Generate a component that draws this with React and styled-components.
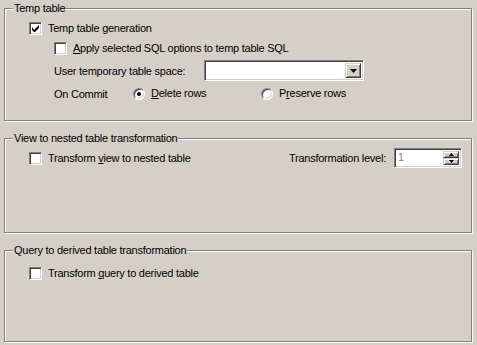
import React from 'react';
import styled, { createGlobalStyle } from 'styled-components';

const GlobalStyle = createGlobalStyle`
  html, body {
    margin: 0;
    padding: 0;
    background: #d4d0c8;
  }
  body {
    font-family: "Liberation Sans", Arial, sans-serif;
    font-size: 11px;
    letter-spacing: -0.25px;
    color: #000;
  }
`;

const Page = styled.div`
  width: 477px;
  height: 345px;
  box-sizing: border-box;
  padding: 8px 4px 0 4px;
  display: flex;
  flex-direction: column;
  gap: 17px;
  background: #d4d0c8;
`;

const Group = styled.div`
  position: relative;
  width: 468px;
  height: ${p => p.$height}px;
  border: 1px solid #808080;
  box-shadow: inset 1px 1px 0 #fff, 1px 1px 0 #fff;
  padding-top: ${p => p.$padTop}px;
  box-sizing: border-box;
  display: flex;
  flex-direction: column;
`;

const Legend = styled.span`
  position: absolute;
  top: -7px;
  left: 8px;
  padding: 0 1px;
  line-height: 13px;
  background: #d4d0c8;
`;

const Row = styled.div`
  display: flex;
  align-items: center;
  height: ${p => p.$height || 13}px;
  margin-left: ${p => p.$indent || 0}px;
  margin-top: ${p => p.$top || 0}px;
  margin-right: ${p => p.$right || 0}px;
`;

const Box = styled.span`
  width: 13px;
  height: 13px;
  box-sizing: border-box;
  flex: none;
  background: #fff;
  border-top: 1px solid #808080;
  border-left: 1px solid #808080;
  border-right: 1px solid #fff;
  border-bottom: 1px solid #fff;
  box-shadow: inset 1px 1px 0 #404040, inset -1px -1px 0 #d4d0c8;
  display: flex;
  align-items: center;
  justify-content: center;
`;

const Round = styled.span`
  width: 12px;
  height: 12px;
  box-sizing: border-box;
  flex: none;
  border-radius: 50%;
  background: #fff;
  border: 1px solid;
  border-color: #808080 #fff #fff #808080;
  box-shadow: inset 1px 1px 0 #404040, inset -1px -1px 0 #d4d0c8;
  display: flex;
  align-items: center;
  justify-content: center;
`;

const Dot = styled.span`
  width: 4px;
  height: 4px;
  border-radius: 50%;
  background: #000;
`;

const Text = styled.span`
  margin-left: ${p => p.$gap || 0}px;
  white-space: nowrap;
  line-height: 13px;
`;

const Key = styled.span`
  text-decoration: underline;
`;

const Label = styled.span`
  width: ${p => p.$width}px;
  flex: none;
  white-space: nowrap;
`;

const Option = styled.span`
  width: 128px;
  flex: none;
  display: flex;
  align-items: center;
`;

const Field = styled.div`
  width: ${p => p.$width}px;
  height: ${p => p.$height}px;
  margin-left: ${p => p.$gap || 0}px;
  box-sizing: border-box;
  flex: none;
  background: #fff;
  border-top: 1px solid #808080;
  border-left: 1px solid #808080;
  border-right: 1px solid #fff;
  border-bottom: 1px solid #fff;
  box-shadow: inset 1px 1px 0 #404040, inset -1px -1px 0 #d4d0c8;
  display: flex;
  align-items: stretch;
  padding: 2px;
`;

const FieldValue = styled.span`
  flex: 1;
  color: #808080;
  line-height: 13px;
  padding-left: 1px;
`;

const ArrowButton = styled.span`
  width: 16px;
  box-sizing: border-box;
  background: #d4d0c8;
  border-top: 1px solid #d4d0c8;
  border-left: 1px solid #d4d0c8;
  border-right: 1px solid #404040;
  border-bottom: 1px solid #404040;
  box-shadow: inset 1px 1px 0 #fff, inset -1px -1px 0 #808080;
  display: flex;
  align-items: center;
  justify-content: center;
  flex: ${p => (p.$half ? 1 : 'none')};
`;

const SpinButtons = styled.div`
  display: flex;
  flex-direction: column;
`;

const Spacer = styled.span`
  flex: 1;
`;

const Check = () => (
  <svg width="7" height="7" viewBox="0 0 7 7">
    <path d="M0 2v3l2 2h1l4-4V0L2 5z" fill="#000" />
  </svg>
);

const Down = () => (
  <svg width="7" height="4" viewBox="0 0 7 4">
    <path d="M0 0h7L3.5 4z" fill="#000" />
  </svg>
);

const Up = () => (
  <svg width="5" height="3" viewBox="0 0 5 3">
    <path d="M0 3h5L2.5 0z" fill="#000" />
  </svg>
);

const SmallDown = () => (
  <svg width="5" height="3" viewBox="0 0 5 3">
    <path d="M0 0h5L2.5 3z" fill="#000" />
  </svg>
);

const CheckBox = ({ checked, children, indent, top }) => (
  <Row $indent={indent} $top={top}>
    <Box>{checked ? <Check /> : null}</Box>
    <Text $gap={6}>{children}</Text>
  </Row>
);

const Radio = ({ selected, children }) => (
  <Option>
    <Round>{selected ? <Dot /> : null}</Round>
    <Text $gap={6}>{children}</Text>
  </Option>
);

export default function App() {
  return (
    <Page>
      <GlobalStyle />
      <Group $height={113} $padTop={13}>
        <Legend>Temp table</Legend>
        <CheckBox checked indent={24}>
          Temp table <Key>g</Key>eneration
        </CheckBox>
        <CheckBox indent={49} top={7}>
          <Key>A</Key>pply selected SQL options to temp table SQL
        </CheckBox>
        <Row $indent={49} $top={5} $height={21}>
          <Label $width={150}>User temporary table space:</Label>
          <Field $width={160} $height={21}>
            <FieldValue />
            <ArrowButton>
              <Down />
            </ArrowButton>
          </Field>
        </Row>
        <Row $indent={49} $top={6}>
          <Label $width={79}>On Commit</Label>
          <Radio selected>
            <Key>D</Key>elete rows
          </Radio>
          <Radio>
            P<Key>r</Key>eserve rows
          </Radio>
        </Row>
      </Group>

      <Group $height={95} $padTop={9}>
        <Legend>View to nested table transformation</Legend>
        <Row $indent={24} $right={9} $height={20}>
          <Box />
          <Text $gap={6}>
            Transform <Key>v</Key>iew to nested table
          </Text>
          <Spacer />
          <Text>Transformation level:</Text>
          <Field $width={68} $height={20} $gap={8}>
            <FieldValue>1</FieldValue>
            <SpinButtons>
              <ArrowButton $half>
                <Up />
              </ArrowButton>
              <ArrowButton $half>
                <SmallDown />
              </ArrowButton>
            </SpinButtons>
          </Field>
        </Row>
      </Group>

      <Group $height={92} $padTop={16}>
        <Legend>Query to derived table transformation</Legend>
        <CheckBox indent={24}>
          Transform <Key>q</Key>uery to derived table
        </CheckBox>
      </Group>
    </Page>
  );
}
